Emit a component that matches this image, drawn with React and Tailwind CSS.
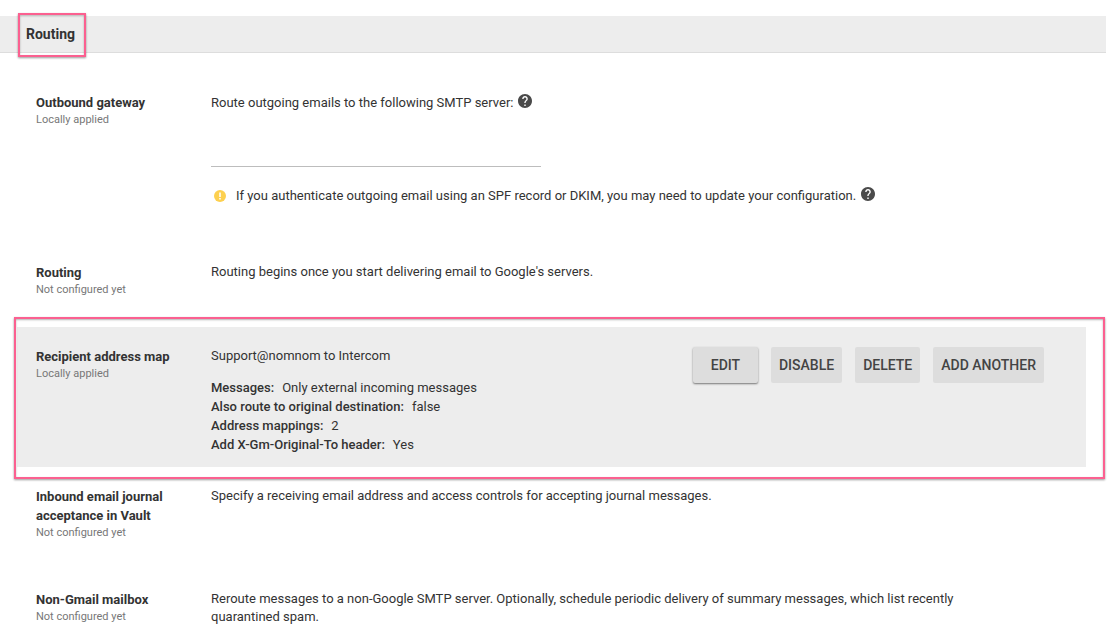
import React from 'react'

const mappingDetails = [
  { label: 'Messages:', value: 'Only external incoming messages' },
  { label: 'Also route to original destination:', value: 'false' },
  { label: 'Address mappings:', value: '2' },
  { label: 'Add X-Gm-Original-To header:', value: 'Yes' },
]

function HelpIcon() {
  return (
    <svg viewBox="2 2 20 20" className="size-3.5 fill-[#4a4a4a]" aria-hidden="true">
      <path d="M12 2C6.48 2 2 6.48 2 12s4.48 10 10 10 10-4.48 10-10S17.52 2 12 2zm1 17h-2v-2h2v2zm2.07-7.75l-.9.92C13.45 12.9 13 13.5 13 15h-2v-.5c0-1.1.45-2.1 1.17-2.83l1.24-1.26c.37-.36.59-.86.59-1.41 0-1.1-.9-2-2-2s-2 .9-2 2H8c0-2.21 1.79-4 4-4s4 1.79 4 4c0 .88-.36 1.68-.93 2.25z" />
    </svg>
  )
}

function HelpButton({ label }) {
  return (
    <button type="button" aria-label={label} className="ml-[5px] pb-1">
      <HelpIcon />
    </button>
  )
}

function WarningIcon() {
  return (
    <svg viewBox="2 2 20 20" className="size-3 shrink-0 fill-[#fdd04f]" aria-hidden="true">
      <circle cx="12" cy="12" r="10" />
      <path className="fill-white" d="M10.7 6h2.6v7.5h-2.6zM10.7 15.2h2.6v2.6h-2.6z" />
    </svg>
  )
}

// pink frame drawn over the part of the page being pointed out
function Callout({ className }) {
  return (
    <div
      className={`pointer-events-none absolute border-2 border-[#fb6090] shadow-[0_1px_2px_rgba(0,0,0,0.4),inset_0_1px_2px_rgba(0,0,0,0.3)] ${className}`}
    />
  )
}

function ActionButton({ children, raised }) {
  return (
    <button
      type="button"
      className={`h-9 min-w-[65px] rounded-xs bg-[#dddddd] px-2 text-sm font-medium text-[#444444] uppercase ${
        raised ? 'shadow-[0_1px_2px_rgba(0,0,0,0.5)]' : ''
      }`}
    >
      {children}
    </button>
  )
}

function SettingRow({ title, status, className = 'pb-[29px]', children }) {
  return (
    <section className={`relative flex pt-5 pl-[19px] ${className}`}>
      <div className="w-[175px] shrink-0 pr-8">
        <h3 className="text-[13px] leading-[19px] font-bold">{title}</h3>
        <p className="text-[11px] leading-4 text-[#777777]">{status}</p>
      </div>
      <div className="min-w-0 flex-1 text-[13px] leading-[18px]">{children}</div>
    </section>
  )
}

export default function App() {
  return (
    <main className="bg-white pt-4 font-[Roboto,sans-serif] text-[#333333]">
      <header className="mr-[7px] flex border-b border-[#dddddd] bg-[#ededed] pl-[26px]">
        <div className="relative">
          <h2 className="text-sm leading-9 font-bold">Routing</h2>
          <Callout className="-top-[3px] -right-[11px] -bottom-[5px] -left-2" />
        </div>
      </header>

      <div className="mt-5 mr-[27px] ml-[17px]">
        <SettingRow title="Outbound gateway" status="Locally applied" className="pb-[37px]">
          <div className="flex min-h-5 items-center">
            <label htmlFor="gateway">Route outgoing emails to the following SMTP server:</label>
            <HelpButton label="About outbound gateways" />
          </div>
          <input
            id="gateway"
            type="text"
            className="mt-[30px] block h-6 w-[330px] border-b border-[#bdbdbd] outline-none"
          />
          <div className="mt-[19px] flex min-h-5 items-center pl-[3px]">
            <WarningIcon />
            <p className="ml-[10px]">
              If you authenticate outgoing email using an SPF record or DKIM, you may need to update your configuration.
            </p>
            <HelpButton label="About SPF and DKIM" />
          </div>
        </SettingRow>

        <SettingRow title="Routing" status="Not configured yet">
          <p>Routing begins once you start delivering email to Google's servers.</p>
        </SettingRow>

        <SettingRow title="Recipient address map" status="Locally applied" className="bg-[#ededed] pr-[42px] pb-[13px]">
          <div className="flex items-start justify-between">
            <div>
              <p>Support@nomnom to Intercom</p>
              <dl className="mt-[13px] leading-[19px]">
                {mappingDetails.map((d) => (
                  <div key={d.label} className="flex gap-2">
                    <dt className="font-medium">{d.label}</dt>
                    <dd>{d.value}</dd>
                  </div>
                ))}
              </dl>
            </div>
            <div className="flex shrink-0 gap-[13px]">
              <ActionButton raised>Edit</ActionButton>
              <ActionButton>Disable</ActionButton>
              <ActionButton>Delete</ActionButton>
              <ActionButton>Add another</ActionButton>
            </div>
          </div>
          <Callout className="-top-[10px] -right-[19px] -bottom-3 -left-[3px]" />
        </SettingRow>

        <SettingRow title="Inbound email journal acceptance in Vault" status="Not configured yet">
          <p>Specify a receiving email address and access controls for accepting journal messages.</p>
        </SettingRow>

        <SettingRow title="Non-Gmail mailbox" status="Not configured yet" className="pb-4">
          <p className="max-w-[780px]">
            Reroute messages to a non-Google SMTP server. Optionally, schedule periodic delivery of summary messages, which list recently quarantined spam.
          </p>
        </SettingRow>
      </div>
    </main>
  )
}
